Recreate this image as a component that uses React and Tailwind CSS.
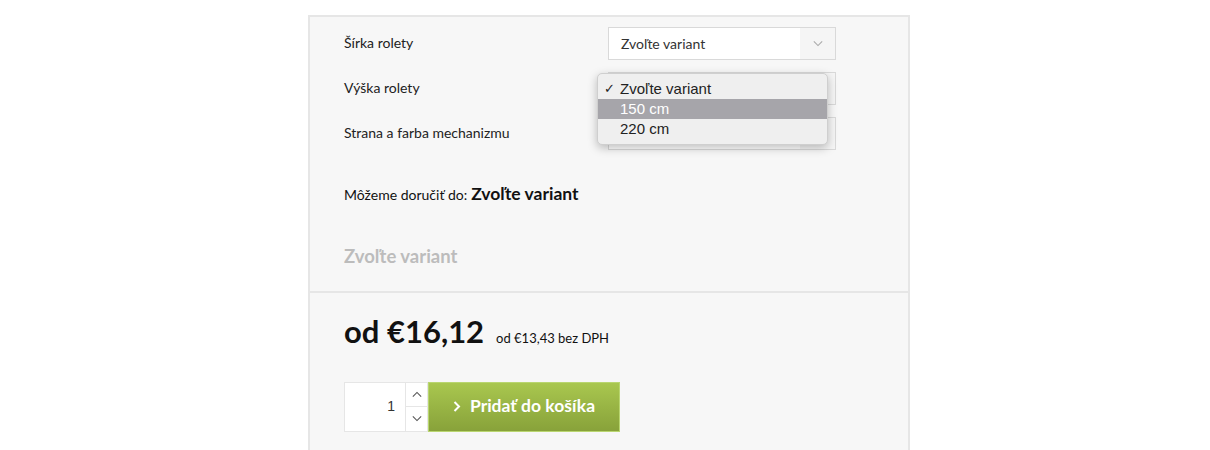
import React from 'react';

const Chevron = ({ className, up }) => (
  <svg viewBox="0 0 12 8" className={className} fill="none" stroke="currentColor" strokeWidth="1.3">
    {up ? <path d="M1 6.5L6 1.5L11 6.5" /> : <path d="M1 1.5L6 6.5L11 1.5" />}
  </svg>
);

const Select = ({ children }) => (
  <div className="relative flex h-[33px] w-[228px] border border-[#d9d9d9] bg-white">
    <div className="flex flex-1 items-center pl-[12px] text-[14px] text-[#333]">Zvoľte variant</div>
    <div className="flex w-[35px] items-center justify-center bg-[#f5f5f5]">
      <Chevron className="w-[10px] h-[7px] text-[#aaa]" />
    </div>
    {children}
  </div>
);

const Menu = () => (
  <div
    className="absolute left-[-12px] top-[0px] z-10 w-[231px] rounded-[5px] border border-[#cfcfcf] bg-[#efefef] py-[5px] shadow-[0_3px_10px_rgba(0,0,0,0.25)] text-[15px] leading-[20px] text-[#222]"
    style={{ fontFamily: '"Liberation Sans", Arial, sans-serif' }}
  >
    <div className="flex items-center pl-[6px]">
      <span className="w-[16px] text-[13px]">✓</span>Zvoľte variant
    </div>
    <div className="bg-[#a6a5aa] pl-[22px] text-white">150 cm</div>
    <div className="pl-[22px]">220 cm</div>
  </div>
);

export default function App() {
  const rows = ['Šírka rolety', 'Výška rolety', 'Strana a farba mechanizmu'];
  return (
    <div className="min-h-[450px] bg-white pt-[15px]" style={{ fontFamily: 'Lato, "Open Sans", sans-serif' }}>
      <div className="ml-[308px] w-[602px] border-2 border-b-0 border-[#e6e6e6] bg-[#f7f7f7]">
        <div className="px-[34px] pt-[10px] pb-[20px]">
          <div className="flex flex-col gap-[12px]">
            {rows.map((label, i) => (
              <div key={label} className="flex items-center">
                <div className="w-[264px] text-[14px] leading-[18px] text-[#222] -translate-y-[1px]">{label}</div>
                <Select>{i === 1 && <Menu />}</Select>
              </div>
            ))}
          </div>
          <div className="mt-[31px] flex items-baseline gap-[4px] text-[#111]">
            <span className="text-[14px]">Môžeme doručiť do:</span>
            <span className="text-[17.5px] font-bold">Zvoľte variant</span>
          </div>
          <div className="mt-[36px] text-[18.5px] font-bold text-[#bcbcbc]">Zvoľte variant</div>
        </div>
        <div className="border-t-2 border-[#e6e6e6] px-[34px] pt-[15px] pb-[30px]">
          <div className="flex items-baseline gap-[12px] text-[#111]">
            <span className="text-[31px] font-bold">od €16,12</span>
            <span className="text-[13px]">od €13,43 bez DPH</span>
          </div>
          <div className="mt-[27px] flex h-[50px]">
            <div className="flex w-[84px] border border-[#e6e6e6] bg-white">
              <div className="flex flex-1 items-center justify-end pr-[10px] text-[14px] text-[#333]" style={{ fontFamily: '"Liberation Sans", Arial, sans-serif' }}>1</div>
              <div className="flex w-[22px] flex-col border-l border-[#e6e6e6]">
                <div className="flex flex-1 items-center justify-center border-b border-[#e6e6e6]">
                  <Chevron up className="w-[10px] h-[7px] text-[#555]" />
                </div>
                <div className="flex flex-1 items-center justify-center">
                  <Chevron className="w-[10px] h-[7px] text-[#555]" />
                </div>
              </div>
            </div>
            <button className="flex w-[192px] items-center justify-center gap-[9px] border border-[#b9d670] bg-gradient-to-b from-[#a9c74f] to-[#88a23a] text-[17.5px] font-bold text-white">
              <svg viewBox="0 0 8 12" className="w-[8px] h-[13px]" fill="none" stroke="currentColor" strokeWidth="2">
                <path d="M1.5 1.5L6 6L1.5 10.5" />
              </svg>
              Pridať do košíka
            </button>
          </div>
        </div>
      </div>
    </div>
  );
}
